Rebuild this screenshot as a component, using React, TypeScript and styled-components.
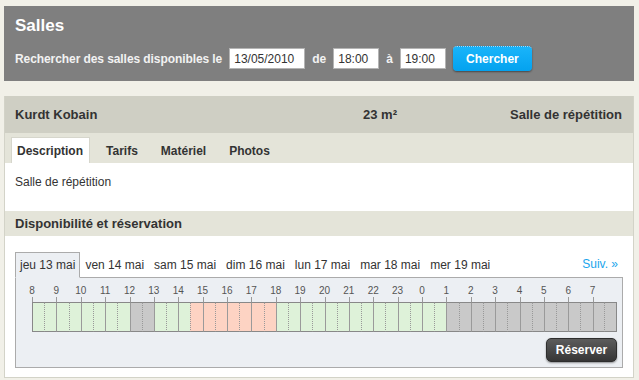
import React from "react";
import styled, { createGlobalStyle } from "styled-components";

const GlobalStyle = createGlobalStyle`
  html, body { margin: 0; padding: 0; }
  body {
    background: #f1f0e8;
    font-family: "Liberation Sans", Arial, sans-serif;
    color: #333;
  }
`;

const Page = styled.div`
  padding: 6px 5px 3px 4px;
  display: flex;
  flex-direction: column;
  gap: 15px;
`;

const SearchPanel = styled.section`
  background: #7f7f7f;
  padding: 9px 11px 10px;
  color: #fff;
`;

const Title = styled.h1`
  margin: 0;
  font-size: 17px;
  line-height: 22px;
  font-weight: bold;
  color: #fff;
`;

const SearchRow = styled.div`
  margin-top: 9px;
  height: 25px;
  display: flex;
  align-items: center;
  gap: 7px;
  font-size: 12px;
  font-weight: bold;
  color: #f2f2f2;
`;

const SearchLabel = styled.span`
  letter-spacing: -0.08px;
`;

const Field = styled.input<{ $w: number }>`
  box-sizing: border-box;
  width: ${(p) => p.$w}px;
  height: 21px;
  border: 1px solid #b4b4b4;
  background: #fff;
  padding: 0 0 0 4px;
  font-family: "Liberation Sans", Arial, sans-serif;
  font-size: 12px;
  color: #333;
  outline: none;
`;

const SearchButton = styled.button`
  box-sizing: border-box;
  width: 79px;
  height: 25px;
  border: none;
  border-top: 1px dotted #a8dcf8;
  border-radius: 4px;
  background: linear-gradient(#19b4fa, #04a2ef);
  box-shadow: 0 1px 2px rgba(0, 0, 0, 0.45);
  color: #fff;
  font-family: "Liberation Sans", Arial, sans-serif;
  font-size: 12px;
  font-weight: bold;
  padding: 0;
`;

const RoomPanel = styled.section`
  border: 1px solid #d3d3c8;
  border-top: none;
  background: #fff;
`;

const RoomHeader = styled.div`
  display: grid;
  grid-template-columns: 348px 1fr auto;
  align-items: center;
  height: 37px;
  padding: 0 11px 0 10px;
  background: #cfcfc4;
  font-size: 13px;
  font-weight: bold;
  color: #333;
`;

const TabBar = styled.div`
  display: flex;
  align-items: flex-end;
  height: 30px;
  padding: 0 6px;
  gap: 10px;
  background: #e4e4d9;
`;

const Tab = styled.div<{ $active?: boolean }>`
  box-sizing: border-box;
  height: 26px;
  padding: 0 6px 0 5px;
  display: flex;
  align-items: center;
  font-size: 12px;
  font-weight: bold;
  color: #333;
  background: ${(p) => (p.$active ? "#fff" : "transparent")};
  border: 1px solid ${(p) => (p.$active ? "#d6d6cc" : "transparent")};
  border-bottom: none;
`;

const Description = styled.div`
  height: 48px;
  padding: 12px 10px 0;
  box-sizing: border-box;
  font-size: 12px;
  line-height: 14px;
  color: #333;
`;

const SectionHeader = styled.h2`
  margin: 0;
  height: 25px;
  padding: 0 10px;
  display: flex;
  align-items: center;
  background: #e4e4d9;
  font-size: 13px;
  font-weight: bold;
  color: #333;
`;

const Booking = styled.div`
  padding: 15px 10px 9px;
`;

const DayBar = styled.div`
  display: flex;
  align-items: flex-end;
  height: 26px;
`;

const DayTab = styled.div<{ $active?: boolean }>`
  box-sizing: border-box;
  height: 26px;
  padding: 0 4px 0 4px;
  display: flex;
  align-items: center;
  font-size: 12px;
  color: #333;
  white-space: nowrap;
  position: relative;
  z-index: 1;
  margin-bottom: ${(p) => (p.$active ? "-1px" : "0")};
  background: ${(p) => (p.$active ? "#eceff3" : "transparent")};
  border: 1px solid ${(p) => (p.$active ? "#ababab" : "transparent")};
  border-bottom: ${(p) => (p.$active ? "1px solid #eceff3" : "none")};
`;

const NextLink = styled.a`
  margin-left: auto;
  padding-right: 5px;
  height: 26px;
  display: flex;
  align-items: center;
  font-size: 12px;
  color: #1aa5ec;
  text-decoration: none;
`;

const DayBox = styled.div`
  border: 1px solid #ababab;
  background: #eceff3;
  padding: 7px 0 5px 16px;
`;

const Timeline = styled.div`
  display: grid;
  grid-template-columns: repeat(24, 1fr);
  width: 585px;
`;

const HourCol = styled.div`
  display: flex;
  flex-direction: column;
`;

const HourLabel = styled.span`
  display: inline-block;
  height: 12px;
  line-height: 12px;
  font-size: 10px;
  color: #555;
  transform: translateX(-50%);
  align-self: flex-start;
`;

const Tick = styled.div`
  height: 5px;
  border-left: 1px solid #9a9a9a;
`;

const Halves = styled.div`
  display: flex;
  height: 30px;
`;

type Status = "free" | "closed" | "booked";

const slotColor: Record<Status, string> = {
  free: "#def2d9",
  closed: "#c9c9c9",
  booked: "#fdd3c3",
};

const Slot = styled.div<{
  $status: Status;
  $half: boolean;
  $first: boolean;
  $last: boolean;
}>`
  flex: 1;
  box-sizing: border-box;
  background: ${(p) => slotColor[p.$status]};
  border-top: 1px solid #888;
  border-bottom: 1px solid #888;
  border-left: ${(p) =>
    p.$first
      ? "1px solid #888"
      : p.$half
      ? "1px dotted #999"
      : "1px solid #9a9a9a"};
  border-right: ${(p) => (p.$last ? "1px solid #888" : "none")};
`;

const ActionRow = styled.div`
  width: 585px;
  margin-top: 6px;
  display: flex;
  justify-content: flex-end;
`;

const ReserveButton = styled.button`
  box-sizing: border-box;
  width: 71px;
  height: 24px;
  border: 1px solid #2e2e2e;
  border-radius: 5px;
  background: linear-gradient(#5c5c5c, #363636);
  box-shadow: 0 1px 2px rgba(0, 0, 0, 0.4);
  color: #fff;
  font-family: "Liberation Sans", Arial, sans-serif;
  font-size: 12px;
  font-weight: bold;
  padding: 0;
`;

const statusAt = (i: number): Status => {
  if (i >= 8 && i <= 9) return "closed";
  if (i >= 13 && i <= 19) return "booked";
  if (i >= 34) return "closed";
  return "free";
};

const days = [
  "jeu 13 mai",
  "ven 14 mai",
  "sam 15 mai",
  "dim 16 mai",
  "lun 17 mai",
  "mar 18 mai",
  "mer 19 mai",
];

export default function App() {
  const hours = Array.from({ length: 24 }, (_, k) => k);
  return (
    <>
      <GlobalStyle />
      <Page>
        <SearchPanel>
          <Title>Salles</Title>
          <SearchRow>
            <SearchLabel>Rechercher des salles disponibles le</SearchLabel>
            <Field $w={76} defaultValue="13/05/2010" />
            <span>de</span>
            <Field $w={46} defaultValue="18:00" />
            <span>à</span>
            <Field $w={46} defaultValue="19:00" />
            <SearchButton>Chercher</SearchButton>
          </SearchRow>
        </SearchPanel>

        <RoomPanel>
          <RoomHeader>
            <span>Kurdt Kobain</span>
            <span>23 m²</span>
            <span>Salle de répétition</span>
          </RoomHeader>
          <TabBar>
            <Tab $active>Description</Tab>
            <Tab>Tarifs</Tab>
            <Tab>Matériel</Tab>
            <Tab>Photos</Tab>
          </TabBar>
          <Description>Salle de répétition</Description>
          <SectionHeader>Disponibilité et réservation</SectionHeader>
          <Booking>
            <DayBar>
              {days.map((d, i) => (
                <DayTab key={d} $active={i === 0}>
                  {d}
                </DayTab>
              ))}
              <NextLink href="#">Suiv. »</NextLink>
            </DayBar>
            <DayBox>
              <Timeline>
                {hours.map((k) => (
                  <HourCol key={k}>
                    <HourLabel>{(8 + k) % 24}</HourLabel>
                    <Tick />
                    <Halves>
                      {[0, 1].map((h) => {
                        const i = k * 2 + h;
                        return (
                          <Slot
                            key={h}
                            $status={statusAt(i)}
                            $half={h === 1}
                            $first={i === 0}
                            $last={i === 47}
                          />
                        );
                      })}
                    </Halves>
                  </HourCol>
                ))}
              </Timeline>
              <ActionRow>
                <ReserveButton>Réserver</ReserveButton>
              </ActionRow>
            </DayBox>
          </Booking>
        </RoomPanel>
      </Page>
    </>
  );
}
